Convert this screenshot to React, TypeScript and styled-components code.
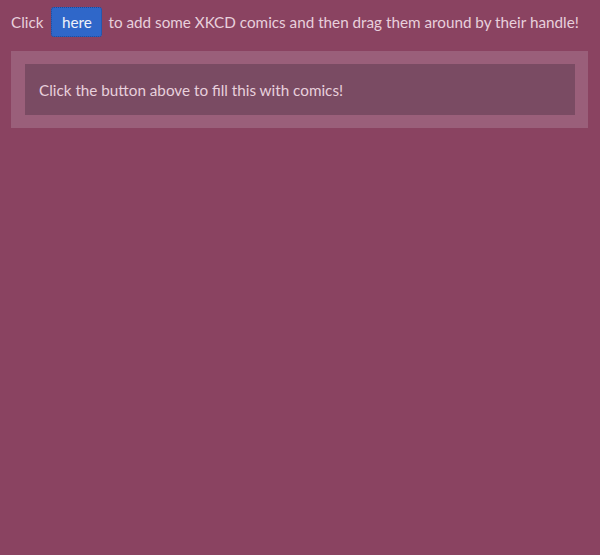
import React from 'react';
import styled, { createGlobalStyle } from 'styled-components';

const GlobalStyle = createGlobalStyle`
  html, body {
    margin: 0;
    padding: 0;
    background: #8a4361;
    font-family: Lato, "Open Sans", sans-serif;
  }
`;

const Page = styled.div`
  width: 600px;
  height: 555px;
  box-sizing: border-box;
  padding: 7px 11px;
  color: #e8d0dc;
  font-size: 15.25px;
`;

const Intro = styled.div`
  display: flex;
  align-items: center;
  height: 30px;
  white-space: nowrap;
`;

const HereButton = styled.button`
  height: 30px;
  width: 51px;
  margin: 0 6px 0 8px;
  padding: 0;
  border: 1px dotted #1d4a98;
  border-radius: 3px;
  background: #2f67c9;
  color: #f0f2fa;
  font-family: inherit;
  font-size: 15.25px;
  cursor: pointer;
`;

const Board = styled.div`
  margin-top: 14px;
  width: 577px;
  box-sizing: border-box;
  padding: 13px 13px 13px 14px;
  background: #9a5f7a;
`;

const Placeholder = styled.div`
  height: 51px;
  display: flex;
  align-items: center;
  padding-left: 14px;
  background: #7a4b63;
  color: #e8d0dc;
`;

export default function App() {
  return (
    <>
      <GlobalStyle />
      <Page>
        <Intro>
          Click
          <HereButton>here</HereButton>
          to add some XKCD comics and then drag them around by their handle!
        </Intro>
        <Board>
          <Placeholder>Click the button above to fill this with comics!</Placeholder>
        </Board>
      </Page>
    </>
  );
}
